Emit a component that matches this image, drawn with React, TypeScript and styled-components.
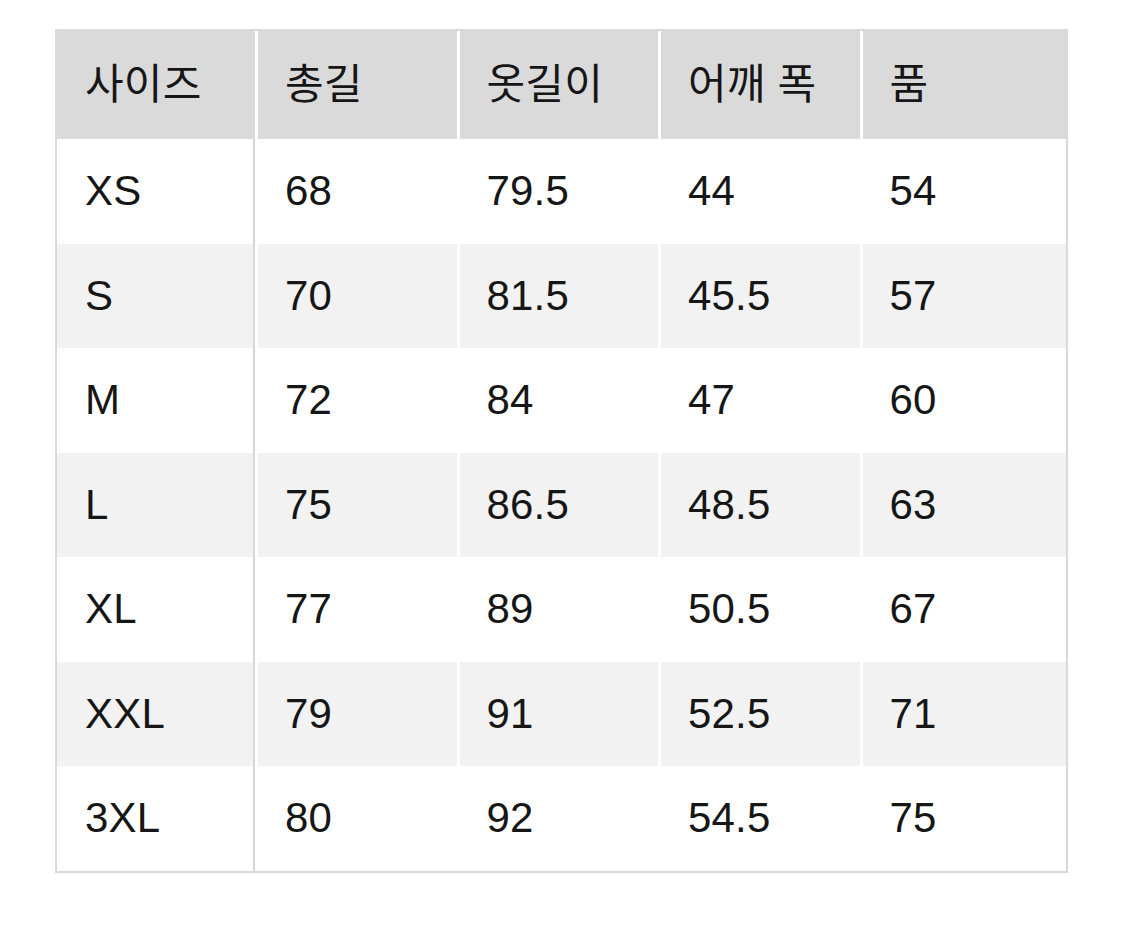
import React from 'react';
import styled, { createGlobalStyle } from 'styled-components';

type Tone = 'head' | 'plain' | 'stripe';

const headers = ['사이즈', '총길', '옷길이', '어깨 폭', '품'];

const rows: string[][] = [
  ['XS', '68', '79.5', '44', '54'],
  ['S', '70', '81.5', '45.5', '57'],
  ['M', '72', '84', '47', '60'],
  ['L', '75', '86.5', '48.5', '63'],
  ['XL', '77', '89', '50.5', '67'],
  ['XXL', '79', '91', '52.5', '71'],
  ['3XL', '80', '92', '54.5', '75'],
];

const tones: Record<Tone, string> = {
  head: '#dadada',
  plain: '#ffffff',
  stripe: '#f2f2f2',
};

const GlobalStyle = createGlobalStyle`
  html, body {
    margin: 0;
    padding: 0;
    background: #ffffff;
  }
  body {
    font-family: 'Liberation Sans', 'Noto Sans CJK KR', sans-serif;
    color: #161616;
  }
`;

const Page = styled.div`
  padding: 29px 0 0 55px;
  min-height: 950px;
  box-sizing: border-box;
`;

const Table = styled.div`
  width: 1009px;
  border: 2px solid #d9d9d9;
  display: flex;
  flex-direction: column;
  background: #ffffff;
`;

const Row = styled.div<{ $head?: boolean }>`
  display: grid;
  grid-template-columns: 198px 198.5px 198.5px 198.5px 1fr;
  column-gap: 3px;
  height: ${(p) => (p.$head ? '108px' : '104.5px')};
`;

const Cell = styled.div<{ $tone: Tone; $first?: boolean }>`
  display: flex;
  align-items: center;
  padding-left: ${(p) => (p.$first ? '28px' : '27px')};
  background: ${(p) => tones[p.$tone]};
  box-shadow: ${(p) => (p.$first && p.$tone !== 'head' ? 'inset -2px 0 0 #d6d6d6' : 'none')};
  font-size: 42px;
  line-height: 1;
  letter-spacing: 0.2px;
  white-space: nowrap;
`;

export default function App() {
  return (
    <>
      <GlobalStyle />
      <Page>
        <Table>
          <Row $head>
            {headers.map((h, i) => (
              <Cell key={h} $tone="head" $first={i === 0}>
                {h}
              </Cell>
            ))}
          </Row>
          {rows.map((r, ri) => (
            <Row key={r[0]}>
              {r.map((v, ci) => (
                <Cell key={ci} $tone={ri % 2 === 1 ? 'stripe' : 'plain'} $first={ci === 0}>
                  {v}
                </Cell>
              ))}
            </Row>
          ))}
        </Table>
      </Page>
    </>
  );
}
